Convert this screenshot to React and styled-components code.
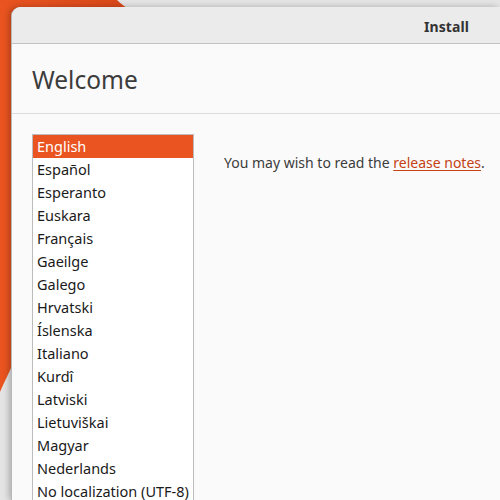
import React from "react";
import styled, { createGlobalStyle } from "styled-components";

const Global = createGlobalStyle`
  html, body { margin: 0; padding: 0; }
  body { width: 500px; height: 500px; overflow: hidden; font-family: "Noto Sans", "DejaVu Sans", sans-serif; }
`;

const Desktop = styled.div`
  position: relative;
  width: 500px;
  height: 500px;
  overflow: hidden;
  background: #e4e4e4;
  padding: 7px 0 0 12px;
  box-sizing: border-box;
`;

const Wallpaper = styled.svg`
  position: absolute;
  left: 0;
  top: 0;
  width: 500px;
  height: 500px;
`;

const Window = styled.div`
  position: relative;
  height: 100%;
  border-top-left-radius: 9px;
  background: #fafafa;
  overflow: hidden;
  box-shadow: -1px 0 0 #b8b8b8, -3px 0 6px rgba(0,0,0,0.25);
  display: flex;
  flex-direction: column;
`;

const HeaderBar = styled.div`
  height: 36px;
  flex: none;
  background: #ebebeb;
  border-bottom: 1px solid #c2c2c2;
  display: flex;
  align-items: center;
  justify-content: flex-end;
  padding-right: 31px;
`;

const HeaderTitle = styled.div`
  font-weight: 700;
  font-size: 14px;
  color: #333;
  letter-spacing: 0.1px;
  position: relative;
  top: 1px;
`;

const TitleArea = styled.div`
  height: 69px;
  flex: none;
  border-bottom: 1px solid #dcdcdc;
  display: flex;
  align-items: center;
  padding-left: 20px;
`;

const PageTitle = styled.h1`
  margin: 0;
  font-weight: 400;
  font-size: 24.5px;
  color: #3c3c3c;
  position: relative;
  top: 1px;
`;

const Body = styled.div`
  display: flex;
  padding: 20px 0 0 20px;
  gap: 30px;
`;

const List = styled.div`
  width: 160px;
  flex: none;
  background: #ffffff;
  border: 1px solid #bcbcbc;
  border-bottom: none;
  display: flex;
  flex-direction: column;
`;

const Row = styled.div`
  height: 23px;
  line-height: 23px;
  padding-left: 4px;
  font-size: 14.5px;
  white-space: nowrap;
  color: ${(p) => (p.$selected ? "#ffffff" : "#1a1a1a")};
  background: ${(p) => (p.$selected ? "#e95420" : "transparent")};
`;

const Notes = styled.p`
  margin: 19px 0 0 0;
  font-size: 14px;
  color: #3c3c3c;
`;

const Link = styled.a`
  color: #c34113;
  text-decoration: underline;
  text-underline-offset: 2px;
`;

const languages = [
  "English", "Español", "Esperanto", "Euskara", "Français", "Gaeilge", "Galego",
  "Hrvatski", "Íslenska", "Italiano", "Kurdî", "Latviski", "Lietuviškai", "Magyar",
  "Nederlands", "No localization (UTF-8)",
];

export default function App() {
  return (
    <>
      <Global />
      <Desktop>
        <Wallpaper viewBox="0 0 500 500">
          <defs>
            <linearGradient id="og" x1="0" y1="0" x2="1" y2="0">
              <stop offset="0" stopColor="#e95420" />
              <stop offset="1" stopColor="#d8481a" />
            </linearGradient>
          </defs>
          <path d="M0 0 L117 0 C120 3 124 6 128 9 L128 20 L14 20 L14 360 C10 372 4 382 0 392 Z" fill="url(#og)" />
        </Wallpaper>
        <Window>
          <HeaderBar>
            <HeaderTitle>Install</HeaderTitle>
          </HeaderBar>
          <TitleArea>
            <PageTitle>Welcome</PageTitle>
          </TitleArea>
          <Body>
            <List>
              {languages.map((l, i) => (
                <Row key={l} $selected={i === 0}>{l}</Row>
              ))}
            </List>
            <Notes>
              You may wish to read the <Link href="#">release notes</Link>.
            </Notes>
          </Body>
        </Window>
      </Desktop>
    </>
  );
}
